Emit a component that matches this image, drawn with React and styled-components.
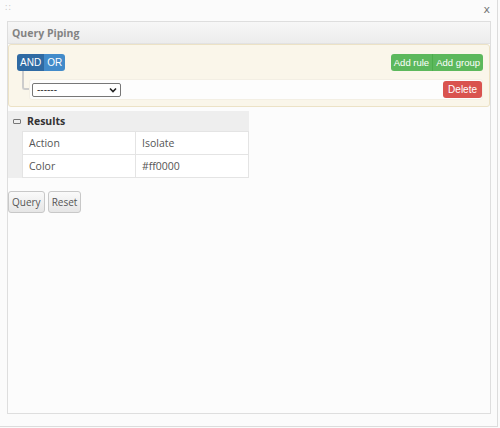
import React from "react";
import styled, { createGlobalStyle } from "styled-components";

const GlobalStyle = createGlobalStyle`
  html, body {
    margin: 0;
    padding: 0;
    background: #fbfbfb;
  }
  body {
    font-family: "Open Sans", "DejaVu Sans", sans-serif;
    font-size: 10.5px;
    color: #555;
  }
`;

const Dialog = styled.div`
  width: 498px;
  height: 427px;
  border-right: 1px solid #dcdcdc;
  border-bottom: 1px solid #dcdcdc;
  background: #fbfbfb;
  display: flex;
  flex-direction: column;
  padding: 0 6px 12px 7px;
  box-sizing: border-box;
`;

const TitleBar = styled.div`
  height: 21px;
  display: flex;
  align-items: flex-start;
  justify-content: space-between;
`;

const Grip = styled.span`
  margin-top: 2px;
  margin-left: -2px;
  display: flex;
  gap: 1px;
  font-size: 9px;
  line-height: 9px;
  color: #c4c4c4;
`;

const Close = styled.span`
  margin-top: 3px;
  margin-right: 1px;
  font-family: "DejaVu Sans", sans-serif;
  font-size: 11px;
  color: #777;
`;

const Panel = styled.div`
  flex: 1;
  border: 1px solid #dedede;
  background: #fcfcfc;
  display: flex;
  flex-direction: column;
`;

const PanelHeading = styled.div`
  height: 22px;
  box-sizing: border-box;
  padding: 0 4px;
  display: flex;
  align-items: center;
  background: linear-gradient(#f7f7f7, #ececec);
  border-bottom: 1px solid #e2e2e2;
  font-weight: 700;
  font-size: 10.5px;
  color: #838383;
`;

const Group = styled.div`
  height: 63px;
  box-sizing: border-box;
  background: #faf6ea;
  border: 1px solid #ece2c6;
  border-radius: 3px;
  padding: 9px 6px 0 8px;
  display: flex;
  flex-direction: column;
`;

const GroupHeader = styled.div`
  display: flex;
  justify-content: space-between;
  align-items: center;
`;

const BtnGroup = styled.div`
  display: flex;
  border-radius: 3px;
  overflow: hidden;
`;

const Btn = styled.button`
  height: 17px;
  border: none;
  margin: 0;
  padding: 0 ${(p) => p.$px || 4}px;
  font-family: "Liberation Sans", Arial, sans-serif;
  font-size: ${(p) => p.$fs || 10}px;
  color: #fff;
  background: ${(p) => p.$bg};
  border-right: ${(p) => (p.$sep ? `1px solid ${p.$sep}` : "none")};
  cursor: pointer;
`;

const DeleteBtn = styled(Btn)`
  border-radius: 3px;
`;

const RulesList = styled.div`
  padding: 8px 0 0 12px;
`;

const Rule = styled.div`
  position: relative;
  height: 21px;
  box-sizing: border-box;
  background: #fdfdfd;
  border: 1px solid #f3efe4;
  border-radius: 3px;
  display: flex;
  align-items: center;
  justify-content: space-between;
  padding: 0 0 0 2px;

  &::before {
    content: "";
    position: absolute;
    left: -8px;
    top: -9px;
    width: 7px;
    height: 19px;
    border-left: 2px solid #ccc;
    border-bottom: 2px solid #ccc;
    border-bottom-left-radius: 3px;
    box-sizing: border-box;
  }
`;

const Select = styled.div`
  width: 89px;
  height: 14px;
  box-sizing: border-box;
  border: 1px solid #777;
  border-radius: 2px;
  background: #fff;
  display: flex;
  align-items: center;
  justify-content: space-between;
  padding: 0 3px 0 4px;
  font-family: "Liberation Sans", Arial, sans-serif;
  font-size: 10px;
  color: #333;
`;

const Results = styled.div`
  width: 241px;
  margin-top: 4px;
  background: #eeeeee;
`;

const ResultsHead = styled.div`
  height: 20px;
  display: flex;
  align-items: center;
  padding-left: 5px;
  gap: 6px;
  font-weight: 700;
  color: #333;
  font-size: 10.5px;
`;

const Minus = styled.span`
  width: 6px;
  height: 3px;
  border: 1px solid #777;
  border-radius: 1px;
  display: inline-block;
`;

const Table = styled.table`
  margin-left: 14px;
  width: 227px;
  border-collapse: collapse;
  background: #fff;
  td {
    height: 22px;
    border: 1px solid #e4e4e4;
    padding: 0 6px;
    color: #555;
    font-size: 10.5px;
  }
  td:first-child {
    width: 100px;
  }
`;

const Actions = styled.div`
  display: flex;
  gap: 3px;
  margin-top: 13px;
`;

const PlainBtn = styled.button`
  height: 22px;
  padding: 0 3px;
  border: 1px solid #c8c8c8;
  border-radius: 3px;
  background: linear-gradient(#fafafa, #e6e6e6);
  font-family: "Open Sans", sans-serif;
  font-size: 10px;
  color: #555;
`;

export default function App() {
  return (
    <>
      <GlobalStyle />
      <Dialog>
        <TitleBar>
          <Grip>
            <span>:</span>
            <span>:</span>
          </Grip>
          <Close>x</Close>
        </TitleBar>
        <Panel>
          <PanelHeading>Query Piping</PanelHeading>
          <Group>
            <GroupHeader>
              <BtnGroup>
                <Btn $bg="#2f6aa3" $px={3}>AND</Btn>
                <Btn $bg="#428bca" $px={3}>OR</Btn>
              </BtnGroup>
              <BtnGroup>
                <Btn $bg="#5cb85c" $sep="#4cae4c" $px={3} $fs={9.5}>Add rule</Btn>
                <Btn $bg="#5cb85c" $px={3} $fs={9.5}>Add group</Btn>
              </BtnGroup>
            </GroupHeader>
            <RulesList>
              <Rule>
                <Select>
                  <span>------</span>
                  <svg width="8" height="6" viewBox="0 0 8 6">
                    <path d="M1 1.5 L4 4.5 L7 1.5" fill="none" stroke="#222" strokeWidth="1.6" />
                  </svg>
                </Select>
                <DeleteBtn $bg="#d9534f" $px={5}>Delete</DeleteBtn>
              </Rule>
            </RulesList>
          </Group>
          <Results>
            <ResultsHead>
              <Minus />
              Results
            </ResultsHead>
            <Table>
              <tbody>
                <tr>
                  <td>Action</td>
                  <td>Isolate</td>
                </tr>
                <tr>
                  <td>Color</td>
                  <td>#ff0000</td>
                </tr>
              </tbody>
            </Table>
          </Results>
          <Actions>
            <PlainBtn>Query</PlainBtn>
            <PlainBtn>Reset</PlainBtn>
          </Actions>
        </Panel>
      </Dialog>
    </>
  );
}
